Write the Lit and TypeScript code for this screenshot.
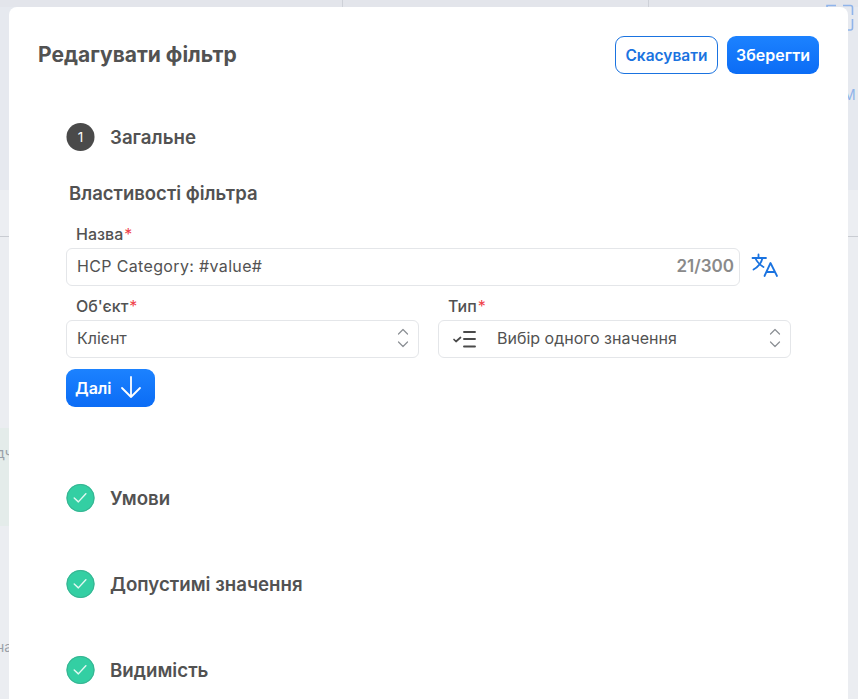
import { LitElement, html, css, svg } from 'lit';
import { customElement } from 'lit/decorators.js';

const chevrons = html`<svg class="chevrons" width="14" height="22" viewBox="0 0 14 22" fill="none" stroke="#8b8f94" stroke-width="1.2" stroke-linecap="round" stroke-linejoin="round">
  <path d="M2.5 7 7 2.5 11.5 7"/><path d="M2.5 15 7 19.5 11.5 15"/>
</svg>`;

const check = svg`<path d="M8.5 15 12.8 19 20.5 10.5" fill="none" stroke="#fff" stroke-opacity=".85" stroke-width="1.5" stroke-linecap="round" stroke-linejoin="round"/>`;

@customElement('app-root')
export class AppRoot extends LitElement {
  static styles = css`
    :host {
      display: block;
      position: relative;
      width: 858px;
      height: 699px;
      overflow: hidden;
      background: #ebedf1;
      font-family: 'Inter', sans-serif;
      color: #525252;
    }

    /* blurred page behind the dialog */
    .backdrop {
      height: 100%;
      display: flex;
      flex-direction: column;
      filter: blur(0.6px);
    }
    .top-strip {
      height: 7px;
      display: flex;
      background: #e3e5eb;
    }
    .top-strip div {
      flex: 0 0 auto;
      border-right: 1px solid #ced1d8;
    }
    .strip-a { width: 342px; }
    .strip-b { width: 305px; }
    .page-head {
      height: 183px;
      background: #e6e9ef;
    }
    .page-tools {
      height: 46px;
      background: #eceef2;
      border-bottom: 1px solid #c9ccd2;
    }
    .page-gap { height: 191px; }
    .page-band {
      height: 98px;
      background: linear-gradient(90deg, #e4ecea 9px, transparent 9px);
    }
    .peek {
      position: absolute;
      color: #9aa0a8;
      font-size: 14px;
      line-height: 16px;
    }
    .peek.left { left: -4px; }
    .peek.right { left: 843px; color: #8fb4ea; }
    .corner-icon {
      position: absolute;
      left: 826px;
      top: 4px;
    }

    .modal {
      position: absolute;
      left: 9px;
      top: 7px;
      width: 839px;
      height: 720px;
      box-sizing: border-box;
      background: #fff;
      border-radius: 8px 8px 0 0;
      padding: 29px 29px 0 29px;
    }

    .head {
      display: flex;
      align-items: center;
      justify-content: space-between;
      height: 38px;
    }
    h1 {
      margin: 0;
      font-size: 21px;
      font-weight: 700;
      line-height: 26px;
    }
    .actions {
      display: flex;
      gap: 9px;
    }
    button {
      font: inherit;
      font-size: 16px;
      font-weight: 600;
      height: 38px;
      border-radius: 9px;
      box-sizing: border-box;
      padding: 0;
      display: flex;
      align-items: center;
      justify-content: center;
    }
    .ghost {
      width: 103px;
      font-size: 15.5px;
      background: #fff;
      border: 1px solid #1a73e0;
      color: #1a73e0;
    }
    .primary {
      width: 92px;
      background: linear-gradient(#1c82ff, #0b6cf5);
      border: none;
      color: #fff;
    }

    .body {
      padding: 48px 28px 0 28px;
    }
    .step {
      display: flex;
      align-items: center;
      gap: 15px;
      height: 30px;
      font-size: 18.7px;
      font-weight: 600;
    }
    .step svg { flex: none; }
    .step + .step { margin-top: 56px; }
    .steps-done { margin-top: 76px; }

    h2 {
      margin: 0;
      padding-left: 3px;
      margin-top: 30px;
      font-size: 18.5px;
      font-weight: 600;
      line-height: 22px;
    }

    .field-label {
      display: block;
      padding-left: 10px;
      margin-bottom: 4px;
      font-size: 16px;
      font-weight: 500;
      line-height: 20px;
    }
    .field-label i {
      color: #ef3f4a;
      font-style: normal;
      font-weight: 400;
      margin-left: 1px;
    }
    .name-field { margin-top: 20px; }
    .name-row {
      display: flex;
      align-items: center;
      gap: 11px;
    }
    .name-row svg { margin-top: -4px; }
    .control {
      height: 38px;
      box-sizing: border-box;
      border: 1px solid #e4e6e9;
      border-radius: 6px;
      background: #fff;
      display: flex;
      align-items: center;
      padding: 0 5px 2px 10px;
      font-size: 16px;
    }
    .name-row .control { width: 674px; }
    .control .grow { flex: 1; }
    .name-value { letter-spacing: 0.35px; }
    .count {
      color: #8a8a8a;
      font-size: 17px;
      font-weight: 600;
    }
    .selects {
      display: grid;
      grid-template-columns: 353px 353px;
      column-gap: 19px;
      margin-top: 10px;
    }
    .selects .control { padding-right: 8px; }
    .type-icon { margin: 2px 21px 0 3px; flex: none; }
    .next {
      width: 89px;
      gap: 8px;
      margin-top: 11px;
      padding-left: 9px;
      justify-content: flex-start;
      background: linear-gradient(#1c82ff, #0b6cf5);
      border: none;
      color: #fff;
    }
    .next svg { margin-top: -3px; }
  `;

  private doneStep(label: string) {
    return html`<div class="step">
      <svg width="29" height="30" viewBox="0 0 30 30">
        <circle cx="15" cy="15" r="14.5" fill="#33cfa3"/>
        <circle cx="15" cy="15" r="14" fill="none" stroke="#3aaf90" stroke-width="1"/>
        ${check}
      </svg>
      ${label}
    </div>`;
  }

  render() {
    return html`
      <div class="backdrop">
        <div class="top-strip">
          <div class="strip-a"></div>
          <div class="strip-b"></div>
        </div>
        <div class="page-head"></div>
        <div class="page-tools"></div>
        <div class="page-gap"></div>
        <div class="page-band"></div>
      </div>
      <span class="peek left" style="top:445px">дч</span>
      <span class="peek left" style="top:639px">на</span>
      <span class="peek right" style="top:87px">М</span>
      <svg class="corner-icon" width="28" height="28" viewBox="0 0 28 28" fill="none" stroke="#8fb4ea" stroke-width="1.6">
        <path d="M1 3V1.5h9"/><path d="M17 1.5h7.5a2 2 0 0 1 2 2V11"/><path d="M26.5 15v9a2 2 0 0 1-2 2H20"/>
      </svg>

      <div class="modal">
        <div class="head">
          <h1>Редагувати фільтр</h1>
          <div class="actions">
            <button class="ghost">Скасувати</button>
            <button class="primary">Зберегти</button>
          </div>
        </div>

        <div class="body">
          <div class="step">
            <svg width="29" height="30" viewBox="0 0 30 30">
              <circle cx="15" cy="15" r="14.5" fill="#4a4a4a"/>
              <text x="15" y="20" text-anchor="middle" font-size="14" font-weight="400" fill="#fff">1</text>
            </svg>
            Загальне
          </div>

          <h2>Властивості фільтра</h2>

          <div class="name-field">
            <label class="field-label">Назва<i>*</i></label>
            <div class="name-row">
              <div class="control">
                <span class="grow name-value">HCP Category: #value#</span>
                <span class="count">21/300</span>
              </div>
              <svg width="28" height="28" viewBox="0 0 28 28" fill="none" stroke="#1a73e0" stroke-width="1.8" stroke-linecap="round" stroke-linejoin="round">
                <path d="M1.5 7h13.5M7.5 3.5V7"/>
                <path d="M11.5 7c-1 4.5-4.5 9-9 11.5"/>
                <path d="M4.5 7.5c1.5 3.5 4 6 8 8.5"/>
                <path d="M13.5 25 19.5 12l6.5 13M15.5 21h8.5"/>
              </svg>
            </div>
          </div>

          <div class="selects">
            <div>
              <label class="field-label">Об'єкт<i>*</i></label>
              <div class="control">
                <span class="grow">Клієнт</span>
                ${chevrons}
              </div>
            </div>
            <div>
              <label class="field-label">Тип<i>*</i></label>
              <div class="control">
                <svg class="type-icon" width="24" height="22" viewBox="0 0 24 22" fill="none" stroke="#4a4a4a" stroke-linecap="round" stroke-linejoin="round">
                  <path d="M2 11.5 4 13.5 8.5 9.5" stroke-width="1.7"/>
                  <path d="M12 4h11M12 11h11M12 18.5h11" stroke-width="1.9"/>
                </svg>
                <span class="grow">Вибір одного значення</span>
                ${chevrons}
              </div>
            </div>
          </div>

          <button class="next">
            Далі
            <svg width="22" height="24" viewBox="0 0 22 24" fill="none" stroke="#fff" stroke-width="1.8" stroke-linecap="round" stroke-linejoin="round">
              <path d="M11 2v20M2 13l9 9 9-9"/>
            </svg>
          </button>

          <div class="steps-done">
            ${this.doneStep('Умови')}
            ${this.doneStep('Допустимі значення')}
            ${this.doneStep('Видимість')}
          </div>
        </div>
      </div>
    `;
  }
}
